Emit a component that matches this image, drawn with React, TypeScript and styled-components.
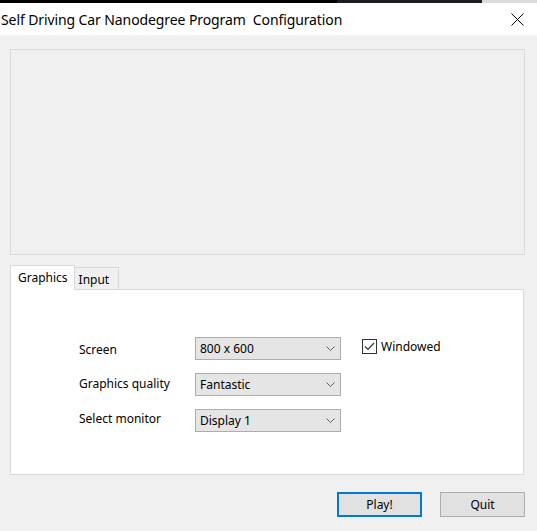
import React from "react";
import styled, { createGlobalStyle } from "styled-components";

const Global = createGlobalStyle`
  html, body { margin: 0; padding: 0; background: #f0f0f0; }
  body { font-family: "Noto Sans", "Open Sans", sans-serif; color: #000; }
`;

const Window = styled.div`
  width: 537px;
  height: 531px;
  display: flex;
  flex-direction: column;
  background: #f0f0f0;
  overflow: hidden;
`;

const TopStrip = styled.div`
  height: 3px;
  display: flex;
`;

const StripSeg = styled.div<{ $w?: number; $c: string }>`
  background: ${(p) => p.$c};
  ${(p) => (p.$w ? `width: ${p.$w}px;` : "flex: 1;")}
`;

const TitleBar = styled.div`
  height: 32px;
  background: #fff;
  display: flex;
  align-items: center;
  justify-content: space-between;
  padding: 0 13px 0 1px;
`;

const Title = styled.span`
  font-size: 14px;
  letter-spacing: -0.1px;
  white-space: pre;
`;

const CloseIcon = styled.svg`
  width: 13px;
  height: 13px;
  display: block;
`;

const Body = styled.div`
  flex: 1;
  display: flex;
  flex-direction: column;
  padding: 14px 12px 0 10px;
`;

const Preview = styled.div`
  height: 204px;
  border: 1px solid #dadada;
  background: #f0f0f0;
`;

const TabStrip = styled.div`
  margin-top: 10px;
  display: flex;
  align-items: flex-end;
  height: 24px;
  position: relative;
  z-index: 1;
`;

const Tab = styled.div<{ $active?: boolean }>`
  font-size: 12px;
  display: flex;
  align-items: center;
  box-sizing: border-box;
  border: 1px solid #d9d9d9;
  border-bottom: none;
  background: ${(p) => (p.$active ? "#fff" : "#f0f0f0")};
  height: ${(p) => (p.$active ? 25 : 22)}px;
  margin-bottom: ${(p) => (p.$active ? -1 : 0)}px;
  padding: ${(p) => (p.$active ? "0 6px 2px 7px" : "2px 9px 0 4px")};
  ${(p) => (p.$active ? "" : "border-left: none;")}
`;

const Panel = styled.div`
  width: 514px;
  height: 186px;
  box-sizing: border-box;
  border: 1px solid #d9d9d9;
  background: #fff;
  padding: 47px 0 0 68px;
`;

const Form = styled.div`
  display: grid;
  grid-template-columns: 116px 146px auto;
  grid-auto-rows: 23px;
  row-gap: 13px;
  font-size: 12px;
`;

const Label = styled.div<{ $dy?: number }>`
  align-self: center;
  transform: translateY(${(p) => p.$dy ?? 0}px);
  white-space: nowrap;
`;

const Select = styled.div`
  box-sizing: border-box;
  height: 23px;
  border: 1px solid #adadad;
  background: #e5e5e5;
  display: flex;
  align-items: center;
  justify-content: space-between;
  padding: 0 5px 0 4px;
`;

const Chevron = styled.svg`
  width: 9px;
  height: 5px;
  display: block;
`;

const CheckRow = styled.label`
  display: flex;
  align-items: center;
  gap: 4px;
  align-self: start;
  margin: 1px 0 0 21px;
`;

const Box = styled.span`
  width: 13px;
  height: 13px;
  border: 1px solid #333;
  background: #fff;
  display: flex;
  align-items: center;
  justify-content: center;
`;

const Buttons = styled.div`
  display: flex;
  justify-content: flex-end;
  gap: 18px;
  margin-top: 17px;
`;

const Button = styled.div<{ $default?: boolean }>`
  box-sizing: border-box;
  width: 85px;
  height: 25px;
  font-size: 12px;
  background: #e1e1e1;
  border: ${(p) => (p.$default ? "2px solid #0078d7" : "1px solid #adadad")};
  display: flex;
  align-items: center;
  justify-content: center;
`;

const Dropdown = ({ value }: { value: string }) => (
  <Select>
    <span>{value}</span>
    <Chevron viewBox="0 0 9 5">
      <path d="M0.5 0.5 L4.5 4.5 L8.5 0.5" fill="none" stroke="#606060" strokeWidth="1" />
    </Chevron>
  </Select>
);

export default function App() {
  return (
    <Window>
      <Global />
      <TopStrip>
        <StripSeg $w={337} $c="#000" />
        <StripSeg $w={145} $c="#1b1d22" />
        <StripSeg $c="#dcdcdc" />
      </TopStrip>
      <TitleBar>
        <Title>Self Driving Car Nanodegree Program  Configuration</Title>
        <CloseIcon viewBox="0 0 13 13">
          <path d="M0.5 0.5 L12.5 12.5 M12.5 0.5 L0.5 12.5" stroke="#000" strokeWidth="1" />
        </CloseIcon>
      </TitleBar>
      <Body>
        <Preview />
        <TabStrip>
          <Tab $active>Graphics</Tab>
          <Tab>Input</Tab>
        </TabStrip>
        <Panel>
          <Form>
            <Label $dy={1}>Screen</Label>
            <Dropdown value="800 x 600" />
            <CheckRow>
              <Box>
                <svg width="11" height="9" viewBox="0 0 11 9">
                  <path d="M1 4.5 L4 7.5 L10 1" fill="none" stroke="#333" strokeWidth="1.2" />
                </svg>
              </Box>
              <span>Windowed</span>
            </CheckRow>
            <Label $dy={-1}>Graphics quality</Label>
            <Dropdown value="Fantastic" />
            <span />
            <Label $dy={-2}>Select monitor</Label>
            <Dropdown value="Display 1" />
            <span />
          </Form>
        </Panel>
        <Buttons>
          <Button $default>Play!</Button>
          <Button>Quit</Button>
        </Buttons>
      </Body>
    </Window>
  );
}
